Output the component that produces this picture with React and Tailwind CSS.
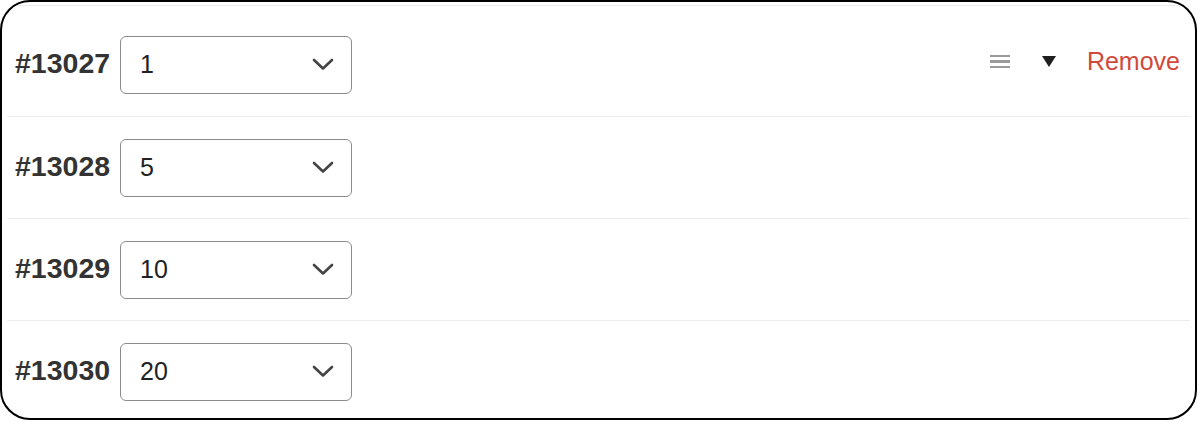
import React from 'react';

// Quantity rows — each order id with a quantity select; first row carries the row actions
const rows = [
  { id: '#13027', qty: '1', actions: true },
  { id: '#13028', qty: '5' },
  { id: '#13029', qty: '10' },
  { id: '#13030', qty: '20' },
];

function Chevron() {
  return (
    <svg width="22" height="13" viewBox="0 0 22 13" fill="none" className="shrink-0">
      <path d="M2 2l9 8.5L20 2" stroke="#444" strokeWidth="2.6" strokeLinecap="round" strokeLinejoin="round" />
    </svg>
  );
}

function QtySelect({ value }) {
  return (
    <div className="ml-[10px] flex h-[58px] w-[232px] items-center justify-between rounded-[6px] border-[1.5px] border-[#8c8c8c] bg-white pl-[19px] pr-[17px]">
      <span className="text-[25px] leading-none text-[#222]">{value}</span>
      <Chevron />
    </div>
  );
}

function RowActions() {
  return (
    <div className="ml-auto -mt-[6px] flex items-center">
      {/* Drag handle */}
      <div className="flex w-[20px] flex-col gap-[3px]">
        <span className="block h-[2.5px] w-full bg-[#9a9a9a]" />
        <span className="block h-[2.5px] w-full bg-[#9a9a9a]" />
        <span className="block h-[2.5px] w-full bg-[#9a9a9a]" />
      </div>
      {/* Collapse toggle */}
      <svg width="14" height="11" viewBox="0 0 14 11" className="ml-[32px]">
        <path d="M0 0h14L7 11z" fill="#1f1f1f" />
      </svg>
      <button className="ml-[31px] text-[25px] leading-none text-[#d04a3c]">Remove</button>
    </div>
  );
}

export default function App() {
  return (
    <div className="h-[422px] w-[1198px] bg-white" style={{ fontFamily: '"Liberation Sans", Arial, sans-serif' }}>
      <div className="h-[420px] w-[1197px] overflow-hidden rounded-[30px] border-2 border-black px-[5px] pt-[3px]">
        {rows.map((row, i) => (
          <div
            key={row.id}
            className={`flex items-center border-t border-[#ececec] pl-[8px] pr-[10px] ${
              i === 0 ? 'h-[111px] pt-[7px]' : 'h-[102px]'
            }`}
          >
            <span className="-mt-[2px] text-[28.5px] font-bold leading-none text-[#333]">{row.id}</span>
            <QtySelect value={row.qty} />
            {row.actions && <RowActions />}
          </div>
        ))}
      </div>
    </div>
  );
}
